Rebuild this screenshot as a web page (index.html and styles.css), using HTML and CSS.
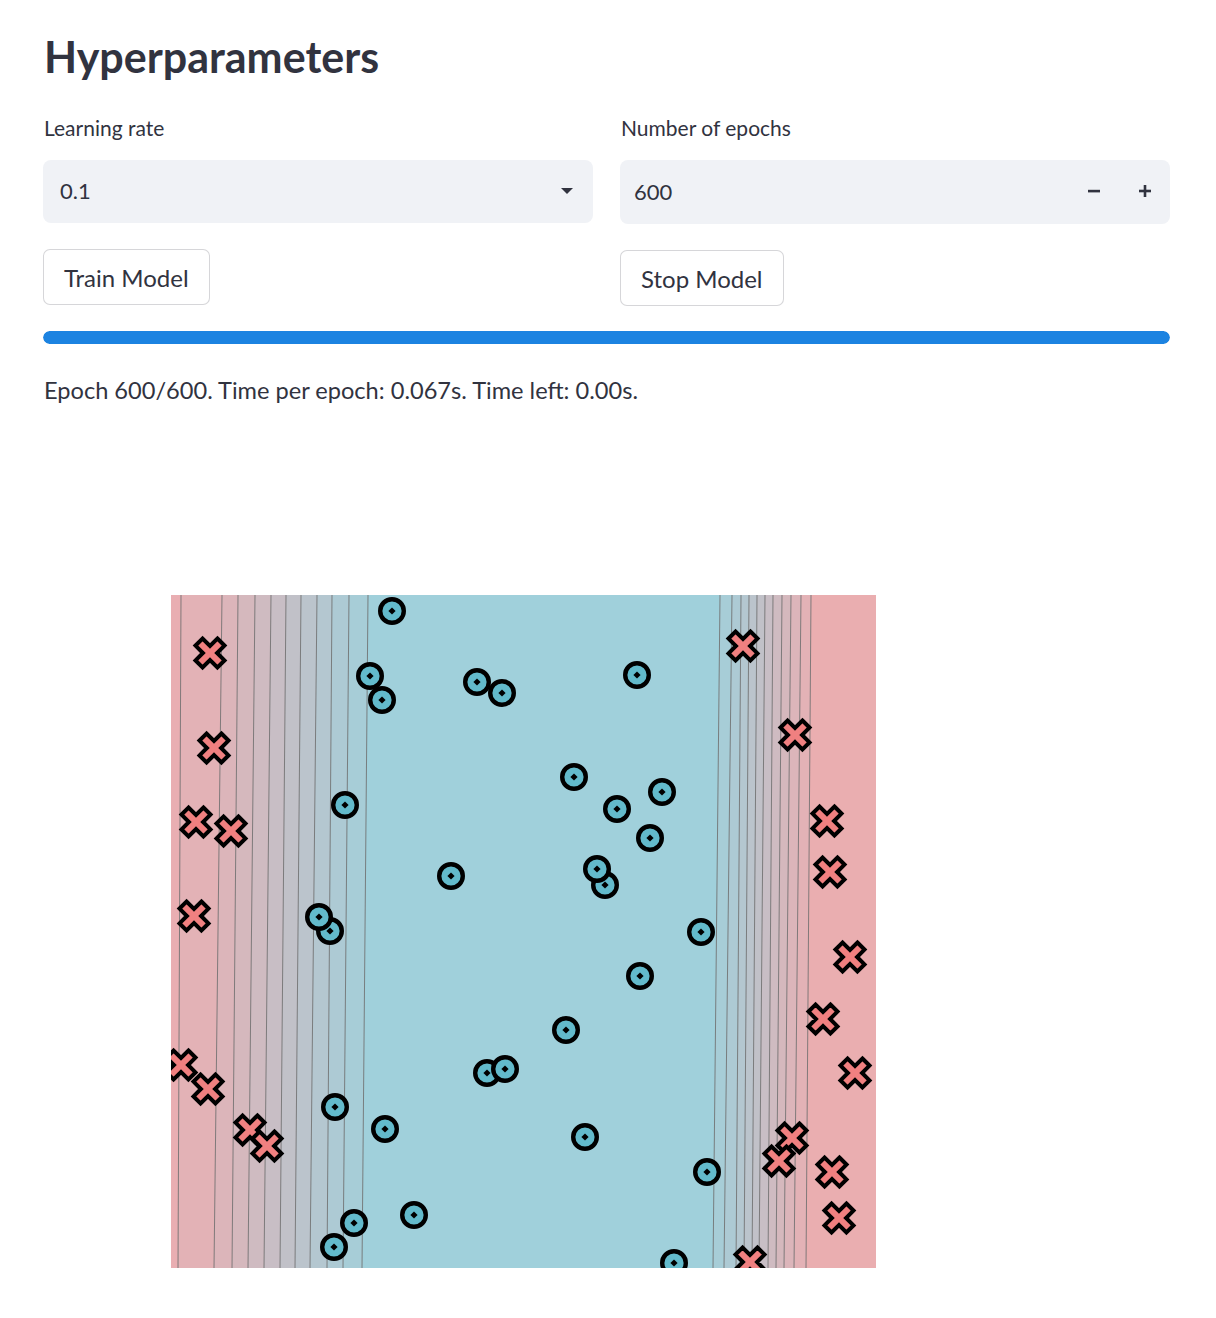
FILE: index.html
```html
<!DOCTYPE html>
<html>
<head>
<meta charset="utf-8">
<link rel="stylesheet" href="styles.css">
</head>
<body>
<div class="main">
  <h1 class="title">Hyperparameters</h1>
  <div class="cols">
    <div class="col">
      <div class="label">Learning rate</div>
      <div class="field select">
        <span class="value">0.1</span>
        <svg class="caret" width="12" height="6" viewBox="0 0 12 6"><path d="M0 0 H12 L6 6 Z" fill="#31333F"/></svg>
      </div>
      <button class="btn">Train Model</button>
    </div>
    <div class="col">
      <div class="label">Number of epochs</div>
      <div class="field number">
        <span class="value">600</span>
        <div class="steppers">
          <svg class="step" width="14" height="14" viewBox="0 0 14 14"><rect x="1" y="5.8" width="12" height="2.6" fill="#31333F"/></svg>
          <svg class="step" width="14" height="14" viewBox="0 0 14 14"><rect x="1" y="5.7" width="12" height="2.6" fill="#31333F"/><rect x="5.7" y="1" width="2.6" height="12" fill="#31333F"/></svg>
        </div>
      </div>
      <button class="btn">Stop Model</button>
    </div>
  </div>
  <div class="progress"><div class="progress-fill" style="width:100%"></div></div>
  <p class="status">Epoch 600/600. Time per epoch: 0.067s. Time left: 0.00s.</p>
  <div class="chart">
    <svg class="plot" width="705" height="673" viewBox="0 0 705 673">
      <defs>
        <g id="o">
          <circle r="11.8" fill="#63BACB" stroke="#000" stroke-width="4.4"/>
          <path d="M0 -3.6 L3.6 0 L0 3.6 L-3.6 0 Z" fill="#000"/>
        </g>
        <g id="x">
          <polygon transform="rotate(45)" points="-5,-15.5 5,-15.5 5,-5 15.5,-5 15.5,5 5,5 5,15.5 -5,15.5 -5,5 -15.5,5 -15.5,-5 -5,-5" fill="#F08080" stroke="#000" stroke-width="4" stroke-linejoin="miter"/>
        </g>
      </defs>
      <rect x="0" y="0" width="705" height="673" fill="#A0D0DB"/>
      <polygon points="0,0 197,0 191,673 0,673" fill="rgb(167,205,215)"/>
      <polygon points="0,0 178,0 172,673 0,673" fill="rgb(173,202,212)"/>
      <polygon points="0,0 161,0 156,673 0,673" fill="rgb(180,199,208)"/>
      <polygon points="0,0 146,0 139,673 0,673" fill="rgb(187,196,204)"/>
      <polygon points="0,0 130,0 124,673 0,673" fill="rgb(193,193,200)"/>
      <polygon points="0,0 115,0 109,673 0,673" fill="rgb(200,190,197)"/>
      <polygon points="0,0 100,0 93,673 0,673" fill="rgb(207,187,193)"/>
      <polygon points="0,0 84,0 77,673 0,673" fill="rgb(213,184,189)"/>
      <polygon points="0,0 67,0 61,673 0,673" fill="rgb(220,181,186)"/>
      <polygon points="0,0 51,0 43,673 0,673" fill="rgb(227,178,182)"/>
      <polygon points="0,0 10,0 7,673 0,673" fill="rgb(233,174,178)"/>
      <polygon points="549,0 705,0 705,673 542,673" fill="rgb(167,205,215)"/>
      <polygon points="561,0 705,0 705,673 553,673" fill="rgb(173,202,212)"/>
      <polygon points="570,0 705,0 705,673 565,673" fill="rgb(180,199,208)"/>
      <polygon points="578,0 705,0 705,673 573,673" fill="rgb(187,196,204)"/>
      <polygon points="586,0 705,0 705,673 581,673" fill="rgb(193,193,200)"/>
      <polygon points="594,0 705,0 705,673 588,673" fill="rgb(200,190,197)"/>
      <polygon points="602,0 705,0 705,673 597,673" fill="rgb(207,187,193)"/>
      <polygon points="611,0 705,0 705,673 605,673" fill="rgb(213,184,189)"/>
      <polygon points="620,0 705,0 705,673 613,673" fill="rgb(220,181,186)"/>
      <polygon points="630,0 705,0 705,673 623,673" fill="rgb(227,178,182)"/>
      <polygon points="640,0 705,0 705,673 635,673" fill="rgb(234,174,176)"/>
      <g stroke="#707070" stroke-width="1" fill="none" opacity="0.85">
        <line x1="10" y1="0" x2="7" y2="673"/>
        <line x1="51" y1="0" x2="43" y2="673"/>
        <line x1="67" y1="0" x2="61" y2="673"/>
        <line x1="84" y1="0" x2="77" y2="673"/>
        <line x1="100" y1="0" x2="93" y2="673"/>
        <line x1="115" y1="0" x2="109" y2="673"/>
        <line x1="130" y1="0" x2="124" y2="673"/>
        <line x1="146" y1="0" x2="139" y2="673"/>
        <line x1="161" y1="0" x2="156" y2="673"/>
        <line x1="178" y1="0" x2="172" y2="673"/>
        <line x1="197" y1="0" x2="191" y2="673"/>
        <line x1="549" y1="0" x2="542" y2="673"/>
        <line x1="561" y1="0" x2="553" y2="673"/>
        <line x1="570" y1="0" x2="565" y2="673"/>
        <line x1="578" y1="0" x2="573" y2="673"/>
        <line x1="586" y1="0" x2="581" y2="673"/>
        <line x1="594" y1="0" x2="588" y2="673"/>
        <line x1="602" y1="0" x2="597" y2="673"/>
        <line x1="611" y1="0" x2="605" y2="673"/>
        <line x1="620" y1="0" x2="613" y2="673"/>
        <line x1="630" y1="0" x2="623" y2="673"/>
        <line x1="640" y1="0" x2="635" y2="673"/>
      </g>
      <use href="#x" x="39" y="58"/>
      <use href="#x" x="572" y="51"/>
      <use href="#x" x="624" y="140"/>
      <use href="#x" x="43" y="153"/>
      <use href="#x" x="25" y="227"/>
      <use href="#x" x="60" y="236"/>
      <use href="#x" x="656" y="226"/>
      <use href="#x" x="659" y="277"/>
      <use href="#x" x="23" y="321"/>
      <use href="#x" x="679" y="362"/>
      <use href="#x" x="652" y="424"/>
      <use href="#x" x="10" y="470"/>
      <use href="#x" x="37" y="494"/>
      <use href="#x" x="79" y="535"/>
      <use href="#x" x="96" y="551"/>
      <use href="#x" x="684" y="478"/>
      <use href="#x" x="621" y="543"/>
      <use href="#x" x="608" y="566"/>
      <use href="#x" x="661" y="577"/>
      <use href="#x" x="668" y="623"/>
      <use href="#x" x="579" y="667"/>
      <use href="#o" x="221" y="16"/>
      <use href="#o" x="199" y="81"/>
      <use href="#o" x="211" y="105"/>
      <use href="#o" x="306" y="87"/>
      <use href="#o" x="331" y="98"/>
      <use href="#o" x="466" y="80"/>
      <use href="#o" x="403" y="182"/>
      <use href="#o" x="491" y="197"/>
      <use href="#o" x="446" y="214"/>
      <use href="#o" x="479" y="243"/>
      <use href="#o" x="174" y="210"/>
      <use href="#o" x="280" y="281"/>
      <use href="#o" x="434" y="290"/>
      <use href="#o" x="426" y="274"/>
      <use href="#o" x="159" y="336"/>
      <use href="#o" x="148" y="322"/>
      <use href="#o" x="530" y="337"/>
      <use href="#o" x="469" y="381"/>
      <use href="#o" x="395" y="435"/>
      <use href="#o" x="316" y="478"/>
      <use href="#o" x="334" y="474"/>
      <use href="#o" x="164" y="512"/>
      <use href="#o" x="214" y="534"/>
      <use href="#o" x="414" y="542"/>
      <use href="#o" x="536" y="577"/>
      <use href="#o" x="183" y="628"/>
      <use href="#o" x="243" y="620"/>
      <use href="#o" x="163" y="652"/>
      <use href="#o" x="503" y="668"/>
    </svg>
  </div>
</div>
</body>
</html>
```

FILE: styles.css
```css
* { box-sizing: border-box; }

body {
  margin: 0;
  background: #ffffff;
  color: #31333F;
  font-family: Lato, "Open Sans", sans-serif;
}

.main {
  width: 1216px;
  padding: 0 46px 0 43px;
}

.title {
  margin: 0;
  padding-top: 29px;
  padding-left: 1px;
  font-size: 43px;
  line-height: 56px;
  font-weight: 700;
  color: #31333F;
}

.cols {
  display: grid;
  grid-template-columns: 550px 550px;
  column-gap: 27px;
  margin-top: 31px;
}

.col {
  display: flex;
  flex-direction: column;
  align-items: flex-start;
}

.label {
  font-size: 21px;
  line-height: 24px;
  padding-left: 1px;
  margin-bottom: 20px;
}

.field {
  width: 100%;
  height: 63px;
  background: #F0F2F6;
  border-radius: 8px;
  display: flex;
  align-items: center;
  justify-content: space-between;
  font-size: 22px;
  padding-bottom: 2px;
}

.select {
  padding: 0 20px 2px 17px;
}

.number {
  padding: 0 18px 2px 14px;
  height: 64px;
}

.steppers {
  display: flex;
  gap: 37px;
  align-items: center;
}

.step { display: block; }

.caret { display: block; }

.btn {
  margin-top: 26px;
  height: 56px;
  padding: 0 20px;
  background: #fff;
  border: 1px solid rgba(49, 51, 63, 0.2);
  border-radius: 7px;
  font-family: inherit;
  font-size: 24px;
  color: #31333F;
}

.progress {
  margin-top: 25px;
  height: 13px;
  border-radius: 7px;
  background: #F0F2F6;
  overflow: hidden;
}

.progress-fill {
  height: 100%;
  background: #1C83E1;
  border-radius: 7px;
}

.status {
  margin: 31px 0 0 1px;
  font-size: 23.6px;
  line-height: 30px;
}

.chart {
  margin-top: 190px;
  padding-left: 128px;
}

.plot { display: block; }
```
